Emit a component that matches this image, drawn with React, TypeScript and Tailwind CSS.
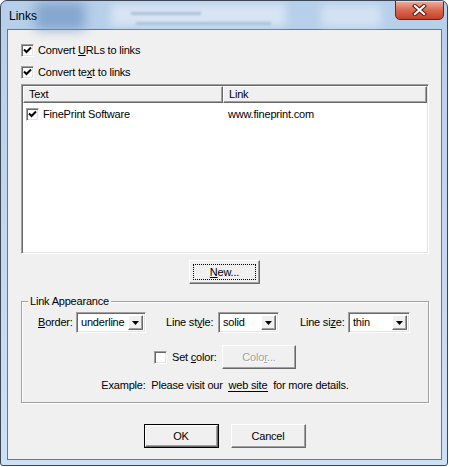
import React from 'react';

// classic 3D edges
const raised =
  'border border-t-white border-l-white border-r-[#696969] border-b-[#696969] shadow-[inset_-1px_-1px_#a0a0a0] bg-[#f0f0f0]';
const sunken =
  'border border-t-[#a0a0a0] border-l-[#a0a0a0] border-r-white border-b-white shadow-[inset_1px_1px_#696969,inset_-1px_-1px_#e3e3e3] bg-white';

const CheckBox = ({ checked }: { checked?: boolean }) => (
  <span className={`inline-flex items-center justify-center w-[13px] h-[13px] shrink-0 ${sunken}`}>
    {checked && (
      <svg width="9" height="9" viewBox="0 0 9 9">
        <path d="M1 3.5 L3.5 6 L8 1.5" fill="none" stroke="#000" strokeWidth="2" />
      </svg>
    )}
  </span>
);

const Combo = ({ value, width }: { value: string; width: string }) => (
  <div className={`flex h-[21px] ${width} ${sunken} p-[2px]`}>
    <span className="flex-1 pl-[2px] leading-[15px] text-[11px] text-black">{value}</span>
    <span className={`flex items-center justify-center w-[15px] h-full ${raised}`}>
      <svg width="7" height="4" viewBox="0 0 7 4">
        <path d="M0 0 H7 L3.5 4 Z" fill="#000" />
      </svg>
    </span>
  </div>
);

const HeaderCell = ({ label, className }: { label: string; className: string }) => (
  <div className={`h-[17px] flex items-center pl-[5px] text-[11px] ${raised} ${className}`}>{label}</div>
);

export default function App() {
  return (
    <div className="w-[449px] h-[467px] bg-white font-['Liberation_Sans',Arial,sans-serif] tracking-[-0.2px] text-black">
      <div className="relative w-[448px] h-[466px] rounded-t-[7px] rounded-b-[3px] border border-[#3c4656] bg-gradient-to-b from-[#b6cfea] to-[#cde1f6] overflow-hidden">
        {/* title bar */}
        <div className="relative h-[28px] flex items-center pl-[8px]">
          <div className="absolute left-[34px] top-[1px] w-[50px] h-[28px] bg-[#6f95c2]/70 blur-[6px]" />
          <div className="absolute left-[110px] top-[3px] w-[175px] h-[22px] bg-white/45 blur-[4px]" />
          <div className="absolute left-[130px] top-[11px] w-[70px] h-[3px] bg-[#6d8db2]/40 blur-[1px]" />
          <div className="absolute left-[135px] top-[21px] w-[135px] h-[3px] bg-[#6d8db2]/35 blur-[1px]" />
          <div className="absolute left-[320px] top-[4px] w-[60px] h-[22px] bg-white/40 blur-[4px]" />
          <span className="relative text-[12px] tracking-normal pt-[1px]">Links</span>
          <div className="absolute right-[3px] top-[-1px] w-[49px] h-[20px] rounded-b-[5px] border border-[#6e2418] bg-gradient-to-b from-[#eab0a2] via-[#d86a52] to-[#c53f26] shadow-[inset_0_1px_rgba(255,255,255,0.5)] flex items-center justify-center">
            <svg width="15" height="12" viewBox="0 0 15 12">
              <path d="M3 2 L12 10 M12 2 L3 10" stroke="#5a1a10" strokeWidth="4.2" strokeLinecap="square" />
              <path d="M3 2 L12 10 M12 2 L3 10" stroke="#fff" strokeWidth="2.2" strokeLinecap="square" />
            </svg>
          </div>
        </div>

        {/* client area */}
        <div className="ml-[6px] mr-[5px] h-[431px] border border-[#6f7680] bg-[#f0f0f0] flex flex-col text-[11px]">
          <label className="mt-[14px] ml-[13px] flex items-center h-[13px]">
            <CheckBox checked />
            <span className="ml-[4px]">
              Convert <u>U</u>RLs to links
            </span>
          </label>
          <label className="mt-[9px] ml-[13px] flex items-center h-[13px]">
            <CheckBox checked />
            <span className="ml-[4px]">
              Convert te<u>x</u>t to links
            </span>
          </label>

          {/* list view */}
          <div className={`mt-[5px] ml-[13px] w-[408px] h-[170px] p-[1px] ${sunken}`}>
            <div className="flex">
              <HeaderCell label="Text" className="w-[200px]" />
              <HeaderCell label="Link" className="flex-1" />
            </div>
            <div className="flex items-center h-[18px] mt-[2px]">
              <div className="w-[200px] flex items-center pl-[3px]">
                <CheckBox checked />
                <span className="ml-[4px]">FinePrint Software</span>
              </div>
              <span className="pl-[5px]">www.fineprint.com</span>
            </div>
          </div>

          <button className={`mt-[6px] self-center w-[71px] h-[24px] p-[3px] ${raised}`}>
            <span className="flex h-full items-center justify-center border border-dotted border-black">
              <u>N</u>ew...
            </span>
          </button>

          {/* group box */}
          <div className="relative mt-[17px] ml-[13px] w-[408px] h-[102px] border border-[#a0a0a0] shadow-[1px_1px_#fff,inset_1px_1px_#fff] flex flex-col">
            <span className="absolute left-[6px] top-[-8px] px-[2px] bg-[#f0f0f0] leading-[14px]">Link Appearance</span>
            <div className="mt-[10px] pl-[16px] flex items-center h-[21px]">
              <span className="w-[38px]">
                <u>B</u>order:
              </span>
              <Combo value="underline" width="w-[70px]" />
              <span className="ml-[20px] w-[52px]">
                Line st<u>y</u>le:
              </span>
              <Combo value="solid" width="w-[61px]" />
              <span className="ml-[21px] w-[48px]">
                Line si<u>z</u>e:
              </span>
              <Combo value="thin" width="w-[62px]" />
            </div>
            <div className="mt-[12px] pl-[132px] flex items-center h-[24px]">
              <CheckBox />
              <span className="ml-[5px] w-[50px]">
                Set <u>c</u>olor:
              </span>
              <button className={`w-[74px] h-[24px] text-[#a0a0a0] [text-shadow:1px_1px_#fff] ${raised}`}>
                Colo<u>r</u>...
              </button>
            </div>
            <p className="mt-[9px] text-center leading-[14px]">
              Example:&nbsp; Please visit our{' '}
              <span className="mx-[2px] px-[1px] border-b border-black">web site</span> for more details.
            </p>
          </div>

          <div className="mt-[21px] flex justify-center gap-[12px]">
            <button className="w-[75px] h-[24px] border border-black">
              <span className={`flex h-full items-center justify-center ${raised}`}>OK</span>
            </button>
            <button className={`w-[75px] h-[24px] ${raised}`}>Cancel</button>
          </div>
        </div>
      </div>
    </div>
  );
}
